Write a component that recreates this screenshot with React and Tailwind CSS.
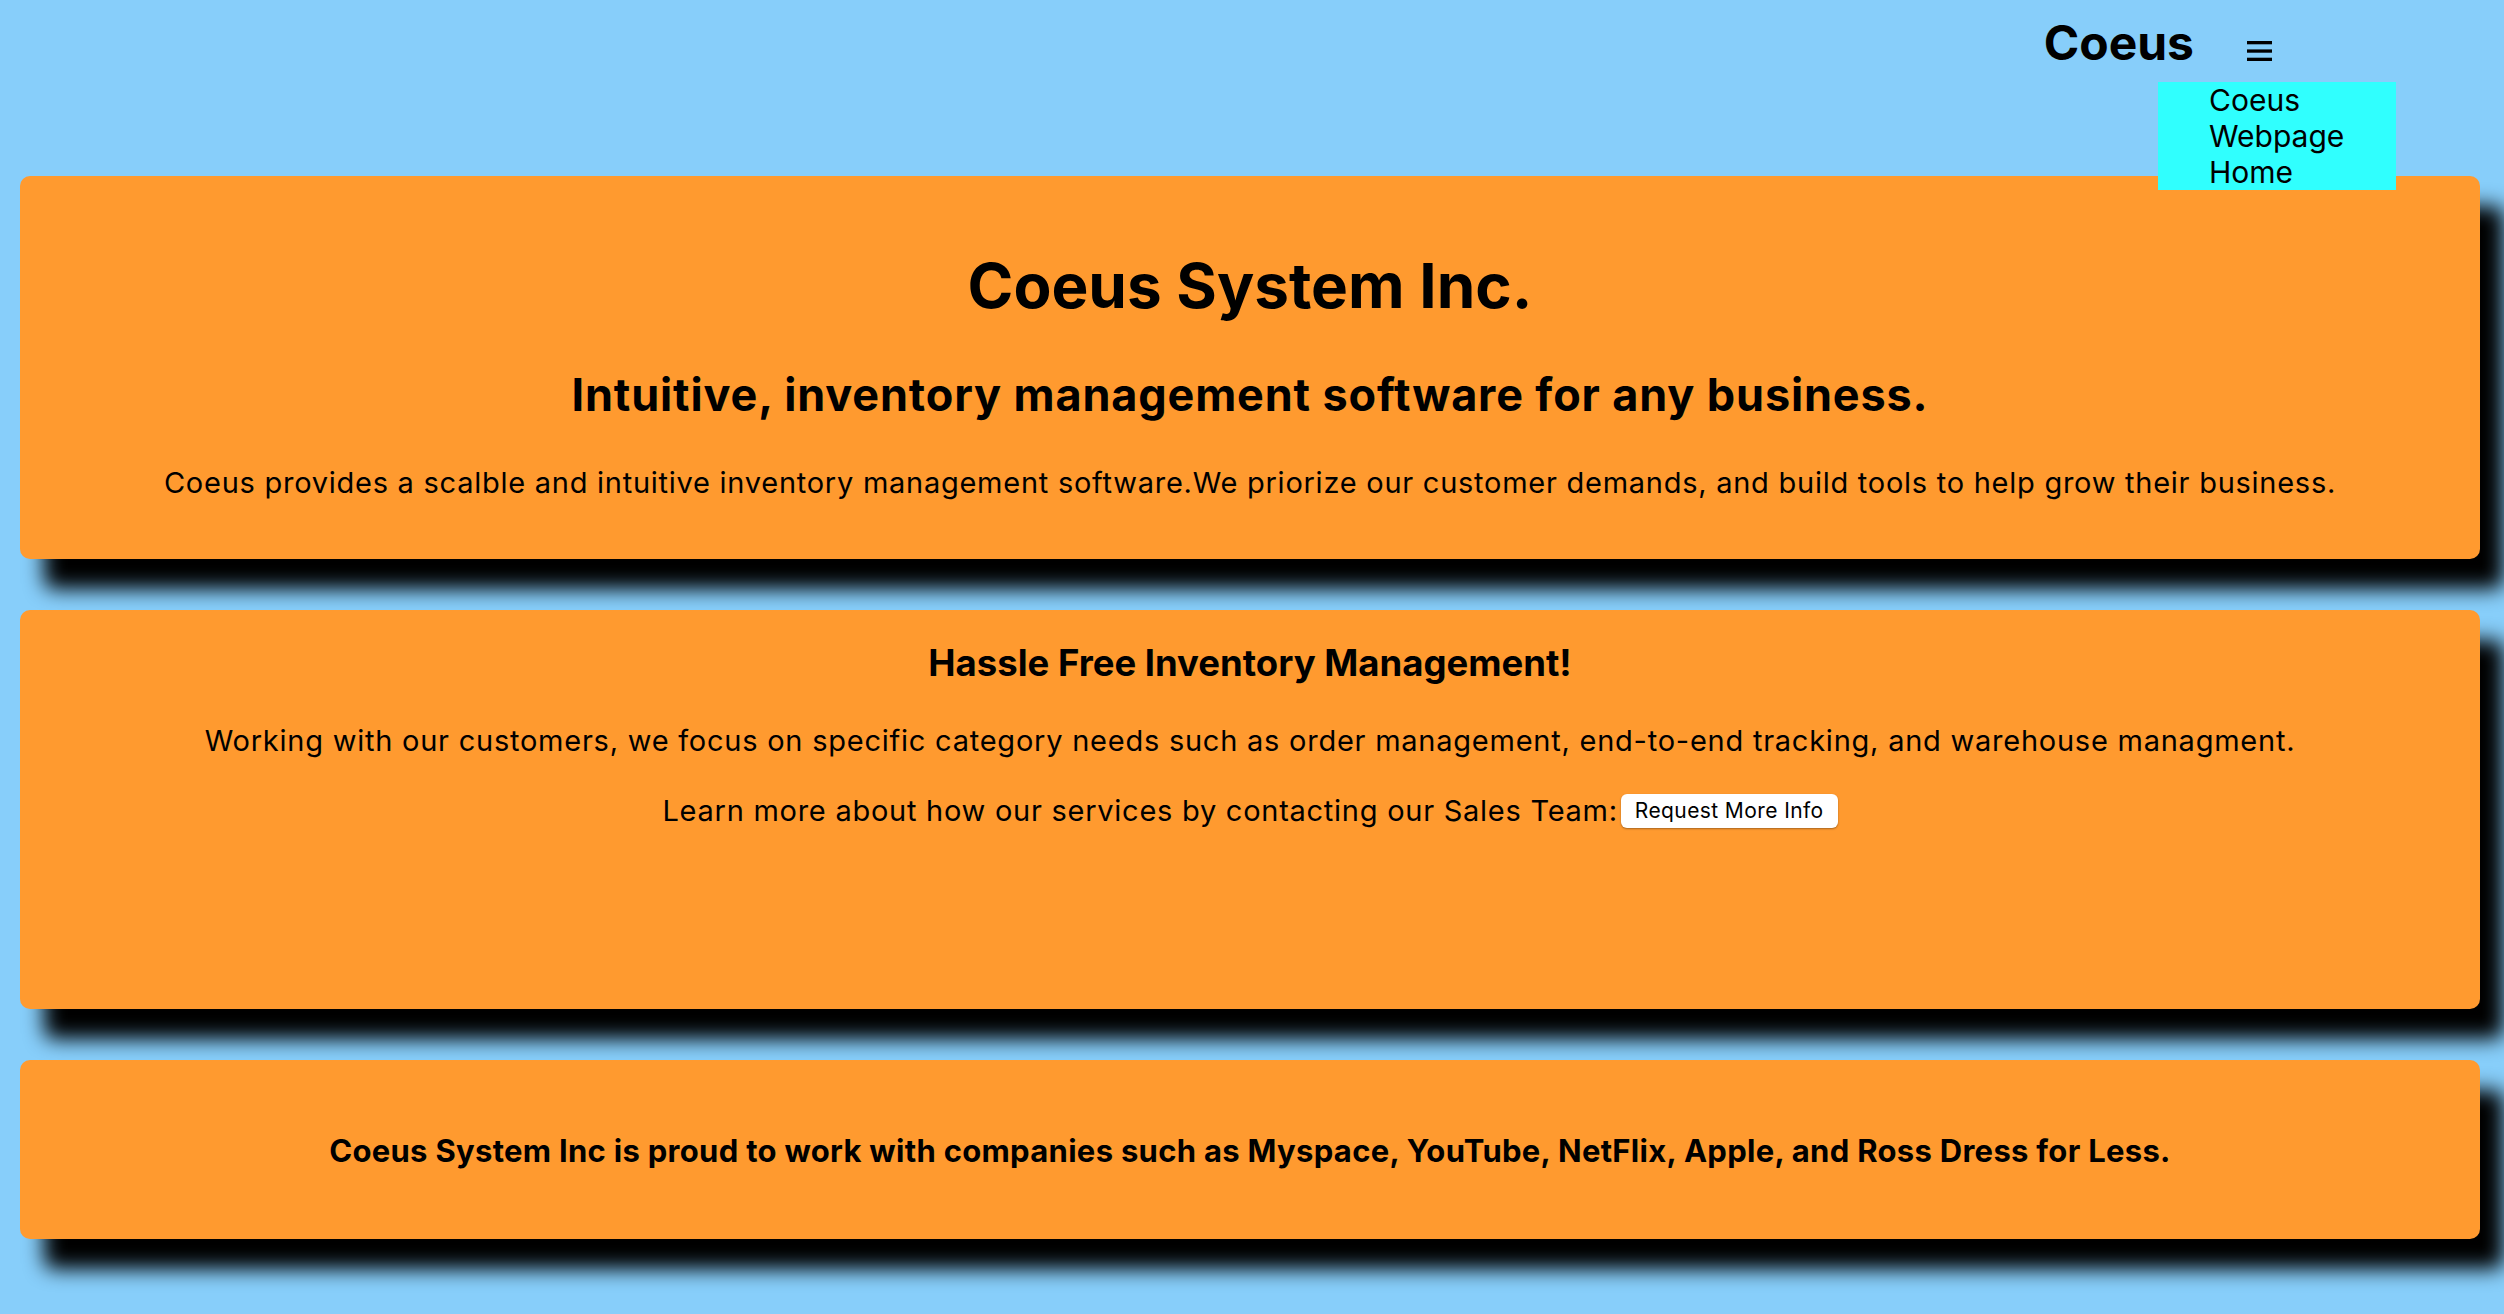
import React from "react";

const font = { fontFamily: "Inter, 'Noto Sans', sans-serif" };

function Card({ className, children }) {
  return (
    <section
      className={
        "w-[2460px] ml-[20px] rounded-[10px] bg-[#FF9A2F] text-black text-center shadow-[24px_30px_20px_0_#000] " +
        className
      }
    >
      {children}
    </section>
  );
}

export default function App() {
  return (
    <div
      className="min-h-screen w-[2504px] bg-[#87CEFA] overflow-hidden text-black"
      style={font}
    >
      <header className="relative z-10 h-[176px]">
        <div className="flex justify-end items-start gap-[53px] pr-[232px] pt-[19px]">
          <h1 className="text-[48px] leading-none font-bold">Coeus</h1>
          <button className="mt-[22px]" aria-label="menu">
            <svg width="25" height="20" viewBox="0 0 25 20">
              <rect x="0" y="0" width="25" height="3.3" fill="#000" />
              <rect x="0" y="8.4" width="25" height="3.3" fill="#000" />
              <rect x="0" y="16.7" width="25" height="3.3" fill="#000" />
            </svg>
          </button>
        </div>
        <ul className="absolute left-[2158px] top-[82px] w-[238px] h-[108px] bg-[#30FFFE] pl-[51px] text-[30px] leading-[36px]">
          <li>
            <span className="block">Coeus</span>
            <span className="block">Webpage</span>
            <span className="block">Home</span>
          </li>
        </ul>
      </header>

      <main className="flex flex-col gap-[51px] pb-[75px]">
        <Card className="h-[383px] pt-[79px]">
          <h2 className="text-[62px] leading-none font-bold">Coeus System Inc.</h2>
          <h3 className="mt-[55px] text-[45px] leading-none font-bold tracking-[0.85px]">
            Intuitive, inventory management software for any business.
          </h3>
          <p className="mt-[51px] text-[29px] leading-none tracking-[0.74px]">
            Coeus provides a scalble and intuitive inventory management software.We priorize our customer demands, and build tools to help grow their business.
          </p>
        </Card>

        <Card className="h-[399px] pt-[35px]">
          <h3 className="text-[36.5px] leading-none font-bold">Hassle Free Inventory Management!</h3>
          <p className="mt-[44px] text-[29px] leading-none tracking-[0.76px]">
            Working with our customers, we focus on specific category needs such as order management, end-to-end tracking, and warehouse managment.
          </p>
          <p className="mt-[39px] text-[29px] leading-none tracking-[0.74px] flex items-center justify-center">
            <span>Learn more about how our services by contacting our Sales Team:</span>
            <button className="ml-[3px] h-[34px] px-[14px] rounded-[6px] bg-white text-[21px] leading-none tracking-[0.4px] text-black shadow-[0_1px_2px_rgba(0,0,0,0.35)]">
              Request More Info
            </button>
          </p>
        </Card>

        <Card className="h-[179px] pt-[75px]">
          <h4 className="text-[31px] leading-none font-bold tracking-[0.3px]">
            Coeus System Inc is proud to work with companies such as Myspace, YouTube, NetFlix, Apple, and Ross Dress for Less.
          </h4>
        </Card>
      </main>
    </div>
  );
}
